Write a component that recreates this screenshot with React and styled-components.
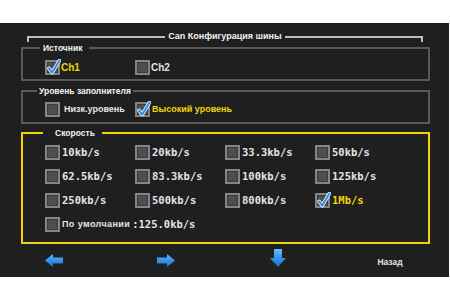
import React from 'react'
import styled, { createGlobalStyle } from 'styled-components'

const GlobalStyle = createGlobalStyle`
  html, body {
    margin: 0;
    background: #ffffff;
  }
`

const Screen = styled.div`
  margin-top: 23px;
  width: 449px;
  height: 254px;
  box-sizing: border-box;
  padding: 7px 0 0 21px;
  background: #1f1f1f;
  display: flex;
  flex-direction: column;
  font-family: "Liberation Sans", Arial, sans-serif;
  color: #e8e8e8;
`

const TitleRow = styled.div`
  display: flex;
  width: 396px;
  height: 12px;
  margin-left: 6px;
`

const Bracket = styled.div`
  flex: 1;
  margin-top: 6px;
  border-top: 2px solid #bdbdbd;
  border-${p => p.side}: 2px solid #bdbdbd;
`

const TitleText = styled.div`
  padding: 0 3px;
  font-size: 9px;
  font-weight: bold;
  line-height: 12px;
  color: #f2f2f2;
`

const Group = styled.fieldset`
  margin: ${p => p.top}px 0 0 0;
  padding: 0;
  min-width: 0;
  width: 409px;
  box-sizing: border-box;
  border: 2px solid ${p => (p.accent ? '#ecd200' : '#5a5a5a')};
`

const Legend = styled.legend`
  margin-left: ${p => p.indent}px;
  padding: ${p => p.pad};
  font-size: 8.5px;
  font-weight: bold;
  line-height: 10px;
  color: #f4f4f4;
`

const Body = styled.div`
  padding: ${p => p.pad};
  display: grid;
  grid-template-columns: repeat(4, 90px);
  row-gap: 9px;
`

const Option = styled.div`
  display: flex;
  align-items: center;
  gap: ${p => p.gap ?? 2}px;
  height: 15px;
  white-space: nowrap;
  grid-column: ${p => (p.span ? 'span 4' : 'auto')};
`

const Box = styled.div`
  position: relative;
  width: 15px;
  height: 15px;
  box-sizing: border-box;
  flex: none;
  background: #4e4e4e;
  border: 2px solid #858585;
  box-shadow: inset 0 0 0 1px #3c3c3c;
`

const Tick = styled.svg`
  position: absolute;
  left: -1px;
  top: -3px;
  width: 15px;
  height: 16px;
`

const Label = styled.span`
  font-size: ${p => p.size || 9}px;
  font-weight: bold;
  line-height: 15px;
  letter-spacing: ${p => p.spread || 0}px;
  color: ${p => (p.on ? '#f2d600' : '#e4e4e4')};
`

const Mono = styled.span`
  font-family: "DejaVu Sans Mono", "Liberation Mono", monospace;
  font-size: 10.5px;
  font-weight: bold;
  line-height: 15px;
  color: ${p => (p.on ? '#f2d600' : '#e4e4e4')};
`

const Nav = styled.div`
  flex: none;
  height: 32px;
  margin-left: -23px;
  display: grid;
  grid-template-columns: repeat(4, 112px);
  align-items: center;
  justify-items: center;
`

const Back = styled.span`
  font-size: 8.5px;
  font-weight: bold;
  color: #e4e4e4;
  padding-top: 3px;
`

const Check = ({ on }) => (
  <Box>
    {on && (
      <Tick viewBox="0 0 15 16">
        <path d="M3 9.5 L6.3 13.5 L13.5 1.5" fill="none" stroke="#ffffff" strokeWidth="3.6" strokeLinejoin="round" strokeLinecap="round" />
        <path d="M3 9.5 L6.3 13.5 L13.5 1.5" fill="none" stroke="#2f8fe8" strokeWidth="2.2" strokeLinejoin="round" strokeLinecap="round" />
      </Tick>
    )}
  </Box>
)

const ArrowGrad = ({ id }) => (
  <defs>
    <linearGradient id={id} x1="0" y1="0" x2="0" y2="1">
      <stop offset="0" stopColor="#6bb9f7" />
      <stop offset="0.5" stopColor="#3095ea" />
      <stop offset="1" stopColor="#1a70c6" />
    </linearGradient>
  </defs>
)

const SideArrow = ({ dir }) => (
  <svg width="18" height="13" viewBox="0 0 18 13">
    <ArrowGrad id={`g-${dir}`} />
    <polygon
      points="0,6.5 8,0 8,3.5 18,3.5 18,9.5 8,9.5 8,13"
      fill={`url(#g-${dir})`}
      transform={dir === 'right' ? 'translate(18 0) scale(-1 1)' : undefined}
    />
  </svg>
)

const DownArrow = () => (
  <svg width="16" height="18" viewBox="0 0 16 18" style={{ marginTop: '-4px' }}>
    <ArrowGrad id="g-down" />
    <polygon points="4,0 12,0 12,9 16,9 8,18 0,9 4,9" fill="url(#g-down)" />
  </svg>
)

const speeds = [
  '10kb/s', '20kb/s', '33.3kb/s', '50kb/s',
  '62.5kb/s', '83.3kb/s', '100kb/s', '125kb/s',
  '250kb/s', '500kb/s', '800kb/s', '1Mb/s',
]

export default function App() {
  return (
    <>
      <GlobalStyle />
      <Screen>
        <TitleRow>
          <Bracket side="left" />
          <TitleText>Can Конфигурация шины</TitleText>
          <Bracket side="right" />
        </TitleRow>

        <Group top={1}>
          <Legend indent={17} pad="0 7px 0 3px">Источник</Legend>
          <Body pad="7px 0 4px 22px">
            <Option gap={1}><Check on /><Label on size={10}>Ch1</Label></Option>
            <Option gap={1}><Check /><Label size={10}>Ch2</Label></Option>
          </Body>
        </Group>

        <Group top={5}>
          <Legend indent={14} pad="0 2px">Уровень заполнителя</Legend>
          <Body pad="6px 0 5px 22px">
            <Option gap={4}><Check /><Label>Низк.уровень</Label></Option>
            <Option gap={2}><Check on /><Label on>Высокий уровень</Label></Option>
          </Body>
        </Group>

        <Group top={4} accent>
          <Legend indent={20} pad="0 7px 0 12px">Скорость</Legend>
          <Body pad="7px 0 10px 22px">
            {speeds.map(s => (
              <Option key={s}>
                <Check on={s === '1Mb/s'} />
                <Mono on={s === '1Mb/s'}>{s}</Mono>
              </Option>
            ))}
            <Option span>
              <Check />
              <Label size={9} spread={0.4}>По умолчании</Label>
              <Mono>:125.0kb/s</Mono>
            </Option>
          </Body>
        </Group>

        <Nav>
          <SideArrow dir="left" />
          <SideArrow dir="right" />
          <DownArrow />
          <Back>Назад</Back>
        </Nav>
      </Screen>
    </>
  )
}
